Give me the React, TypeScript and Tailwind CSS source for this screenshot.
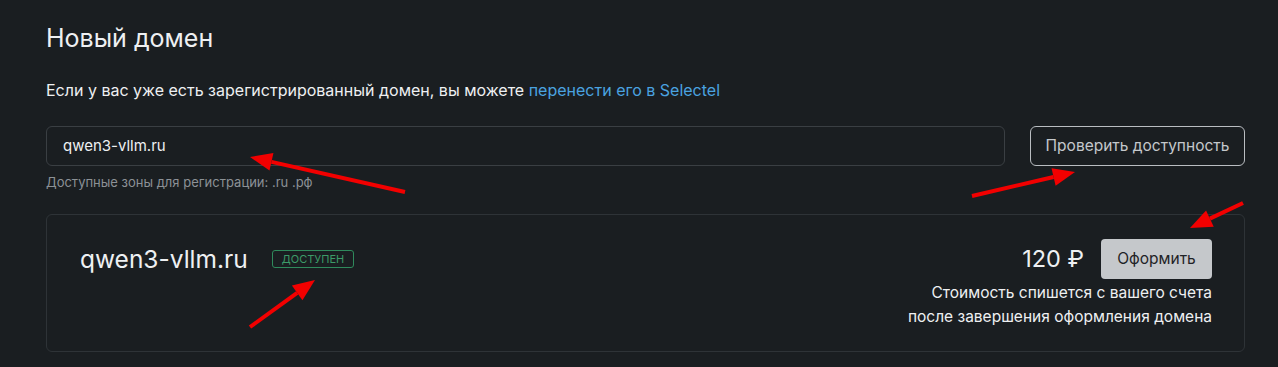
import React from 'react';

const font = { fontFamily: 'Inter, "Noto Sans", sans-serif' };

function Arrows() {
  // red annotation arrows drawn over the screenshot
  const arrows = [
    { x1: 405, y1: 192, x2: 250, y2: 157 },
    { x1: 972, y1: 196, x2: 1075, y2: 172 },
    { x1: 1243, y1: 203, x2: 1190, y2: 228 },
    { x1: 250, y1: 327, x2: 315, y2: 280 },
  ];
  return (
    <svg className="pointer-events-none absolute inset-0" width="1278" height="367">
      {arrows.map((a, i) => {
        const dx = a.x2 - a.x1;
        const dy = a.y2 - a.y1;
        const len = Math.hypot(dx, dy);
        const ux = dx / len;
        const uy = dy / len;
        const hl = 22;
        const hw = 9;
        const bx = a.x2 - ux * hl;
        const by = a.y2 - uy * hl;
        const p1 = `${bx - uy * hw},${by + ux * hw}`;
        const p2 = `${bx + uy * hw},${by - ux * hw}`;
        return (
          <g key={i}>
            <line x1={a.x1} y1={a.y1} x2={bx} y2={by} stroke="#f20000" strokeWidth="4" />
            <polygon points={`${a.x2},${a.y2} ${p1} ${p2}`} fill="#f20000" />
          </g>
        );
      })}
    </svg>
  );
}

export default function App() {
  return (
    <div className="relative h-[367px] w-[1278px] overflow-hidden bg-[#1a1e21] text-[#eef0f2]" style={font}>
      <div className="flex flex-col pl-[46px] pr-[33px] pt-[22px]">
        <h1 className="text-[25px] leading-[32px] font-normal">Новый домен</h1>

        <p className="mt-[26px] text-[16px] leading-[20px]">
          Если у вас уже есть зарегистрированный домен, вы можете{' '}
          <span className="text-[#4aa3e0]">перенести его в Selectel</span>
        </p>

        <div className="mt-[26px] flex gap-[25px]">
          <div className="flex flex-1 flex-col">
            <div className="flex h-[40px] items-center rounded-[6px] border border-[#3a3f43] px-[16px] text-[15px]">
              qwen3-vllm.ru
            </div>
            <div className="mt-[8px] text-[13px] leading-[16px] text-[#8c9196]">
              Доступные зоны для регистрации: .ru .рф
            </div>
          </div>
          <button className="flex h-[40px] w-[215px] items-center justify-center rounded-[6px] border border-[#b9bdc1] text-[15.5px] text-[#c4c8cc]">
            Проверить доступность
          </button>
        </div>

        <div className="mt-[24px] flex h-[138px] justify-between rounded-[6px] border border-[#2e3337] pl-[33px] pr-[32px] pt-[24px]">
          <div className="flex items-center gap-[24px] self-start pt-[6px]">
            <span className="text-[24.5px] leading-[28px]">qwen3-vllm.ru</span>
            <span className="rounded-[3px] border border-[#2f8a5c] px-[9px] text-[11px] leading-[16px] text-[#3c9a68]">
              ДОСТУПЕН
            </span>
          </div>
          <div className="flex flex-col items-end">
            <div className="flex items-center gap-[17px]">
              <span className="text-[23.5px] leading-[28px]">120 ₽</span>
              <button className="flex h-[40px] w-[111px] items-center justify-center rounded-[4px] bg-[#c5c8cb] text-[15.5px] text-[#1f2326]">
                Оформить
              </button>
            </div>
            <div className="mt-[2px] text-right text-[15.5px] leading-[24px]">
              <div>Стоимость спишется с вашего счета</div>
              <div>после завершения оформления домена</div>
            </div>
          </div>
        </div>
      </div>
      <Arrows />
    </div>
  );
}
